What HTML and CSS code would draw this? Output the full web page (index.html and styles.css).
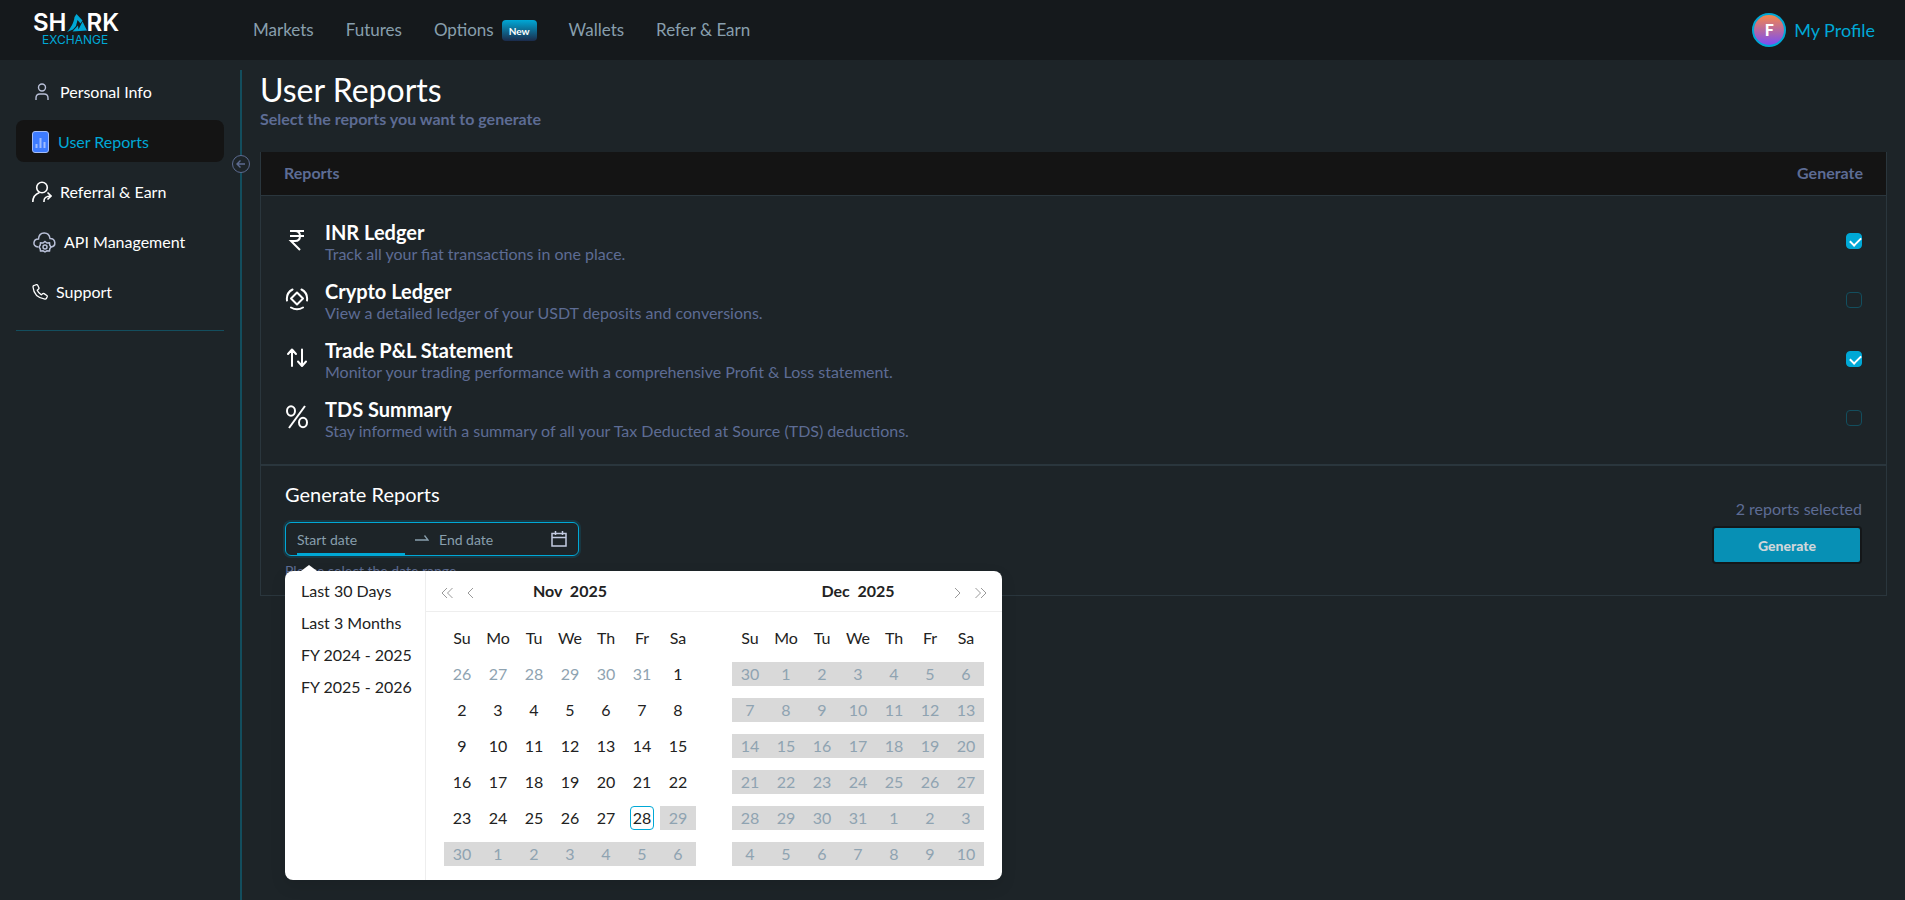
FILE: index.html
```html
<!DOCTYPE html>
<html lang="en">
<head>
    <meta charset="UTF-8">
    <meta name="viewport" content="width=device-width, initial-scale=1.0">
    <title>User Reports</title>
    <link rel="stylesheet" href="styles.css">
</head>
<body>

<header class="topbar">
    <a href="#" class="logo">
        <span class="logo-name">SH<svg width="20" height="18" viewBox="0 0 20 18" fill="#00a8d6"><path d="M0 18C4 14 7 8 7.500 3L9.500 0l6 6.500-2 3-3-3.500-1.500 6-3 3.500z"/><path d="M5.500 17.500l5.500-6 .5 4 4-8 4.500 9z"/></svg>RK</span>
        <span class="logo-sub">EXCHANGE</span>
    </a>
    <nav class="main-nav">
        <a href="#">Markets</a>
        <a href="#">Futures</a>
        <a href="#">Options <span class="badge">New</span></a>
        <a href="#">Wallets</a>
        <a href="#">Refer &amp; Earn</a>
    </nav>
    <a href="#" class="profile"><span class="avatar">F</span>My Profile</a>
</header>

<div class="page">

    <!-- Sidebar -->
    <aside class="sidebar">
        <nav class="side-nav">
            <a href="#">
                <svg width="20" height="18" viewBox="0 0 20 18" fill="none" stroke="#b9c0d8" stroke-width="1.400"><circle cx="10" cy="4.500" r="3.500"/><path d="M4 17v-2q0-4 4-4h4q4 0 4 4v2"/></svg>
                Personal Info
            </a>
            <a href="#" class="active">
                <svg width="18" height="22" viewBox="0 0 18 22"><rect x="0.500" y="0.500" width="16" height="21" rx="2.500" fill="#3d7bff" stroke="#a5bdf5"/><path d="M4.500 17v-4M8.500 17V7M12.500 17v-6" stroke="#9dbcff" stroke-width="2"/></svg>
                User Reports
            </a>
            <a href="#">
                <svg width="20" height="22" viewBox="0 0 20 22" fill="none" stroke="#fff" stroke-width="1.600"><circle cx="10" cy="6.500" r="5.300"/><path d="M.8 21q0-7 6.700-9.500M12 21q-.5-6 7-6M15.500 11.500l3.500 3.500-3.500 3.500"/></svg>
                Referral &amp; Earn
            </a>
            <a href="#">
                <svg width="24" height="22" viewBox="1 0 24 22" fill="none" stroke="#b9c0d8" stroke-width="1.500"><path d="M7 16C1 15.500 2 8 7.500 8 8 0 18 0 19 7.500c6 0 6.500 8 1 8.500"/><path d="M14 10.500l2 1.500 2.500-.2.300 2.500 1.200 1.700-1.200 1.800-.3 2.200-2.500-.2-2 1.200-2-1.200-2.500.2-.3-2.200L8 16l1.200-1.700.3-2.500 2.500.2z"/><circle cx="14" cy="16" r="2"/></svg>
                API Management
            </a>
            <a href="#">
                <svg width="16" height="18" viewBox="1 0 16 18" fill="none" stroke="#fff" stroke-width="1.300" stroke-linejoin="round"><path d="M3 2.500l2.500-.8q.8-.2 1.200.6l1.200 2.500q.3.700-.3 1.300L6.200 7.300q1.300 3 4.200 4.500l1.500-1.200q.6-.4 1.200 0l2.700 1.900q.7.500.4 1.300l-.8 1.600q-.4.800-1.500.7Q3 14.500 2 4q-.1-1.200 1-1.500z"/></svg>
                Support
            </a>
        </nav>
        <hr>
        <button class="collapse" aria-label="Collapse sidebar">
            <svg width="18" height="18" viewBox="0 0 18 18" fill="none" stroke="#5d6b90"><circle cx="9" cy="9" r="8.500" fill="#1d2428"/><path d="M13 9H5.500M8.500 5.500L5 9l3.500 3.500" stroke-width="1.400"/></svg>
        </button>
    </aside>

    <main class="content">
        <h1>User Reports</h1>
        <p class="subtitle">Select the reports you want to generate</p>

        <div class="card">
            <!-- Reports list -->
            <table class="reports">
                <thead>
                    <tr><th>Reports</th><th>Generate</th></tr>
                </thead>
                <tbody>
                    <tr>
                        <td>
                            <div class="report">
                                <svg width="24" height="24" viewBox="0 0 24 24" fill="none" stroke="#fff" stroke-width="2"><path d="M5 3h14M5 8h14M5 3h5q5 0 5 5t-5 5H6l9 9"/></svg>
                                <div>
                                    <label for="inr">INR Ledger</label>
                                    <p>Track all your fiat transactions in one place.</p>
                                </div>
                            </div>
                        </td>
                        <td><input type="checkbox" id="inr" checked></td>
                    </tr>
                    <tr>
                        <td>
                            <div class="report">
                                <svg width="24" height="24" viewBox="0 0 24 24" fill="none" stroke="#fff" stroke-width="2" stroke-linecap="round"><path d="M2 13.500Q1 6 7.500 2.500M22 13.500q1-7.500-5.500-11M6 20.500q6 3.500 12 0"/><path d="M12 5.500l6 6-6 6-6-6z" stroke-linejoin="round"/></svg>
                                <div>
                                    <label for="crypto">Crypto Ledger</label>
                                    <p>View a detailed ledger of your USDT deposits and conversions.</p>
                                </div>
                            </div>
                        </td>
                        <td><input type="checkbox" id="crypto"></td>
                    </tr>
                    <tr>
                        <td>
                            <div class="report">
                                <svg width="24" height="24" viewBox="0 0 24 24" fill="none" stroke="#fff" stroke-width="2" stroke-linecap="round" stroke-linejoin="round"><path d="M7 20V4M3 8l4-4.500L11 8M17 3.500v16M13 15.500l4 4.500 4-4.500"/></svg>
                                <div>
                                    <label for="pnl">Trade P&amp;L Statement</label>
                                    <p>Monitor your trading performance with a comprehensive Profit &amp; Loss statement.</p>
                                </div>
                            </div>
                        </td>
                        <td><input type="checkbox" id="pnl" checked></td>
                    </tr>
                    <tr>
                        <td>
                            <div class="report">
                                <svg width="24" height="24" viewBox="0 0 24 24" fill="none" stroke="#fff" stroke-width="2"><ellipse cx="6" cy="6" rx="4" ry="4.700"/><ellipse cx="18" cy="17.500" rx="4" ry="4.700"/><path d="M20 1L4 23"/></svg>
                                <div>
                                    <label for="tds">TDS Summary</label>
                                    <p>Stay informed with a summary of all your Tax Deducted at Source (TDS) deductions.</p>
                                </div>
                            </div>
                        </td>
                        <td><input type="checkbox" id="tds"></td>
                    </tr>
                </tbody>
            </table>

            <!-- Date range and generate button -->
            <div class="generate">
                <div>
                    <h2>Generate Reports</h2>
                    <div class="picker">
                        <div class="picker-field">
                            <input type="text" class="focused" placeholder="Start date" aria-label="Start date">
                            <svg class="arrow" width="14" height="14" viewBox="0 0 14 14" fill="none" stroke="#889fad" stroke-width="1.300"><path d="M0 8h13L9.500 3.500"/></svg>
                            <input type="text" placeholder="End date" aria-label="End date">
                            <svg class="calendar-icon" width="16" height="16" viewBox="0 0 16 16" fill="none" stroke="#c3cbe2" stroke-width="1.500"><path d="M1 2.500h14v12.500H1zM1 6.500h14M4.500 0v4M11.500 0v4"/></svg>
                        </div>

                        <div class="dropdown">
                            <ul class="presets">
                                <li><button>Last 30 Days</button></li>
                                <li><button>Last 3 Months</button></li>
                                <li><button>FY 2024 - 2025</button></li>
                                <li><button>FY 2025 - 2026</button></li>
                            </ul>
                            <div class="month">
                                <div class="month-head">
                                    <div class="month-nav">
                                        <button aria-label="Previous year"><svg width="12" height="12" viewBox="0 0 12 12"><path d="M6 1L1 6l5 5M11.500 1l-5 5 5 5"/></svg></button>
                                        <button aria-label="Previous month"><svg width="12" height="12" viewBox="0 0 12 12"><path d="M8 1L3 6l5 5"/></svg></button>
                                    </div>
                                    <strong>Nov&nbsp; 2025</strong>
                                    <div class="month-nav"></div>
                                </div>
                                <table class="days">
                                    <thead><tr><th>Su</th><th>Mo</th><th>Tu</th><th>We</th><th>Th</th><th>Fr</th><th>Sa</th></tr></thead>
                                    <tbody id="nov"></tbody>
                                </table>
                            </div>
                            <div class="month">
                                <div class="month-head">
                                    <div class="month-nav"></div>
                                    <strong>Dec&nbsp; 2025</strong>
                                    <div class="month-nav">
                                        <button aria-label="Next month"><svg width="12" height="12" viewBox="0 0 12 12"><path d="M4 1l5 5-5 5"/></svg></button>
                                        <button aria-label="Next year"><svg width="12" height="12" viewBox="0 0 12 12"><path d="M.5 1l5 5-5 5M6 1l5 5-5 5"/></svg></button>
                                    </div>
                                </div>
                                <table class="days">
                                    <thead><tr><th>Su</th><th>Mo</th><th>Tu</th><th>We</th><th>Th</th><th>Fr</th><th>Sa</th></tr></thead>
                                    <tbody id="dec"></tbody>
                                </table>
                            </div>
                        </div>
                    </div>
                    <p class="hint">Please select the date range</p>
                </div>
                <div class="action">
                    <span>2 reports selected</span>
                    <button class="generate-btn">Generate</button>
                </div>
            </div>
        </div>
    </main>
</div>

<script>
    const today = new Date(2025, 10, 28);

    // Fill a calendar body with six weeks for the given month
    function fillMonth(id, year, month) {
        const body = document.getElementById(id);
        const offset = new Date(year, month, 1).getDay();

        for (let week = 0; week < 6; week++) {
            const row = document.createElement('tr');
            for (let day = 0; day < 7; day++) {
                const date = new Date(year, month, 1 - offset + week * 7 + day);
                const cell = document.createElement('td');
                const span = document.createElement('span');
                span.textContent = date.getDate();

                if (date.getMonth() !== month) cell.classList.add('outside');
                if (date > today) cell.classList.add('disabled');
                if (date.getTime() === today.getTime()) cell.classList.add('today');

                cell.appendChild(span);
                row.appendChild(cell);
            }
            body.appendChild(row);
        }
    }

    fillMonth('nov', 2025, 10);
    fillMonth('dec', 2025, 11);
</script>

</body>
</html>
```
FILE: styles.css
```css
* {
    box-sizing: border-box;
}

body {
    font-family: Lato, sans-serif;
    font-size: 16px;
    line-height: 20px;
    margin: 0;
    min-height: 100vh;
    display: flex;
    flex-direction: column;
    background-color: #1d2428;
    color: white;
}

a {
    color: inherit;
    text-decoration: none;
}

h1, h2, p, ul {
    margin: 0;
    padding: 0;
    font-weight: 400;
}

button, input {
    font: inherit;
    color: inherit;
    margin: 0;
    padding: 0;
    border: none;
    background: none;
}

button {
    cursor: pointer;
}

svg {
    flex: none;
    display: block;
}

table {
    border-collapse: collapse;
}

/* Header */
.topbar {
    display: flex;
    align-items: center;
    height: 60px;
    padding: 0 30px;
    background-color: #15191c;
}

.logo {
    width: 223px;
    padding-left: 3px;
    font-family: Inter, sans-serif;
}

.logo-name {
    display: flex;
    align-items: center;
    font-size: 24px;
    font-weight: 600;
    line-height: 20px;
}

.logo-sub {
    display: block;
    padding-left: 9px;
    font-size: 12px;
    line-height: 14px;
    color: #00a8d6;
}

.main-nav {
    display: flex;
    gap: 32px;
    font-size: 17px;
    color: #889fad;
}

.main-nav a {
    display: flex;
    align-items: center;
    gap: 8px;
}

.badge {
    padding: 1px 7px 0;
    border-radius: 4px;
    font-size: 10px;
    font-weight: 700;
    line-height: 20px;
    color: white;
    background: linear-gradient(#00a8d6, #1b2b4b);
}

.profile {
    display: flex;
    align-items: center;
    gap: 8px;
    margin-left: auto;
    font-size: 18px;
    color: #00a8d6;
}

.avatar {
    width: 34px;
    height: 34px;
    border: 2px solid #00a8d6;
    border-radius: 50%;
    background: linear-gradient(#f6864a, #7a4df5);
    color: white;
    font-size: 16px;
    font-weight: 900;
    line-height: 30px;
    text-align: center;
}

.page {
    display: flex;
    flex: 1;
    padding-top: 10px;
}

/* Sidebar */
.sidebar {
    position: relative;
    width: 242px;
    flex: none;
    padding: 0 16px;
    border-right: 2px solid #134e5e;
}

.side-nav {
    display: flex;
    flex-direction: column;
    gap: 8px;
}

.side-nav a {
    display: flex;
    align-items: center;
    gap: 8px;
    height: 42px;
    padding: 2px 16px 0;
    border-radius: 8px;
}

.side-nav .active {
    background-color: #141414;
    color: #00a8d6;
}

.sidebar hr {
    margin: 18px 0 0;
    border: none;
    border-top: 1px solid #134e5e;
}

.collapse {
    position: absolute;
    top: 85px;
    right: -10px;
}

/* Content */
.content {
    flex: 1;
    padding: 0 18px;
}

h1 {
    font-size: 32px;
    line-height: 39px;
}

.subtitle {
    font-weight: 700;
    color: #5d6c94;
}

.card {
    margin-top: 23px;
    border: 1px solid #2a363d;
    border-top: none;
}

.reports {
    width: 100%;
}

.reports th {
    height: 43px;
    padding: 0 23px;
    border-bottom: 1px solid #2a363d;
    background-color: #141414;
    color: #5d6c94;
    text-align: left;
}

.reports td {
    padding: 8px 24px 7px;
}

.reports tr:first-child td {
    padding-top: 24px;
}

.reports tr:last-child td {
    padding-bottom: 23px;
}

.reports th:last-child,
.reports td:last-child {
    text-align: right;
}

.report {
    display: flex;
    align-items: center;
    gap: 16px;
}

.report svg {
    margin-bottom: 3px;
}

.report label {
    display: block;
    font-size: 20px;
    font-weight: 700;
    line-height: 24px;
}

.report p {
    color: #5d6c94;
}

input[type="checkbox"] {
    appearance: none;
    display: inline-block;
    width: 16px;
    height: 16px;
    margin-bottom: 3px;
    border: 1px solid #134e5e;
    border-radius: 4px;
    vertical-align: middle;
}

input[type="checkbox"]:checked {
    border-color: #00a8d6;
    background-color: #00a8d6;
}

input[type="checkbox"]:checked::after {
    content: "";
    display: block;
    width: 5px;
    height: 9px;
    margin: 1px 0 0 5px;
    border: solid white;
    border-width: 0 2px 2px 0;
    transform: rotate(45deg);
}

.generate {
    display: flex;
    justify-content: space-between;
    align-items: center;
    padding: 16px 24px 14px;
    border-top: 2px solid #2a363d;
}

h2 {
    font-size: 20px;
    line-height: 24px;
}

.picker {
    position: relative;
    margin: 16px 0 5px;
}

.picker-field {
    display: flex;
    align-items: center;
    width: 294px;
    height: 34px;
    padding: 0 11px;
    border: 1px solid #00a8d6;
    border-radius: 6px;
    box-shadow: 0 0 0 2px rgba(0, 168, 214, 0.15);
}

.picker-field input {
    width: 108px;
    height: 32px;
    padding-top: 4px;
    border-bottom: 2px solid transparent;
    font-size: 14px;
}

.picker-field .focused {
    border-color: #00a8d6;
}

.picker-field input:focus {
    outline: none;
}

.picker-field input::placeholder {
    color: #889fad;
    opacity: 1;
}

.arrow {
    margin: 0 10px;
}

.calendar-icon {
    margin-left: auto;
}

.hint {
    color: #5d6c94;
    font-size: 14px;
}

.action {
    display: flex;
    flex-direction: column;
    align-items: flex-end;
    gap: 7px;
    color: #5d6c94;
}

.generate-btn {
    width: 150px;
    height: 38px;
    padding-top: 2px;
    border: 2px solid #141719;
    border-radius: 4px;
    background-color: #0790b5;
    color: #cfd6da;
    font-size: 14px;
    font-weight: 900;
}

/* Date range dropdown */
.dropdown {
    position: absolute;
    z-index: 1;
    top: 49px;
    left: 0;
    display: flex;
    border-radius: 8px;
    background-color: white;
    color: #222;
    box-shadow: 0 6px 16px rgba(0, 0, 0, 0.1);
}

.dropdown::before {
    content: "";
    position: absolute;
    top: -6px;
    left: 16px;
    border: solid transparent;
    border-width: 0 8px 6px;
    border-bottom-color: white;
}

.presets {
    width: 141px;
    padding: 4px 16px;
    border-right: 1px solid #eee;
    list-style: none;
    white-space: nowrap;
}

.presets li {
    height: 32px;
}

.presets button {
    line-height: 32px;
}

.month {
    width: 288px;
    padding-bottom: 8px;
}

.month-head {
    display: flex;
    align-items: center;
    height: 41px;
    padding: 0 15px;
    border-bottom: 1px solid #eee;
}

.month-head strong {
    flex: 1;
    text-align: center;
}

.month-nav {
    display: flex;
    gap: 12px;
    width: 36px;
    padding-top: 4px;
}

.month-head svg {
    fill: none;
    stroke: #999;
}

.days {
    margin: 8px 18px 0;
    text-align: center;
}

.days th,
.days td {
    width: 36px;
    height: 36px;
    padding: 0;
    font-weight: 400;
}

.days span {
    display: block;
    line-height: 24px;
}

.days .outside,
.days .disabled {
    color: #8fa3b1;
}

.days .disabled span {
    background-color: #d9d9d9;
}

.days .today span {
    width: 24px;
    height: 24px;
    margin: auto;
    border: 1px solid #00a8d6;
    border-radius: 4px;
    line-height: 22px;
}
```
